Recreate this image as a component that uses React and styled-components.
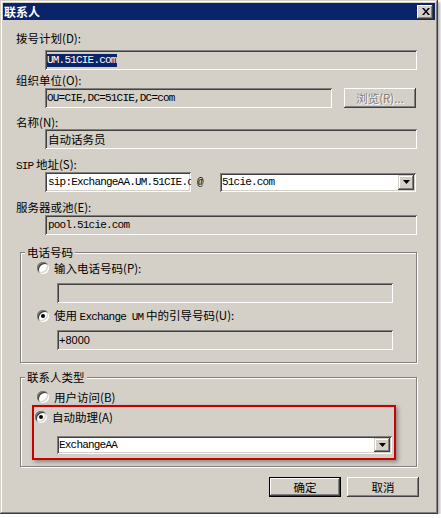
import React from 'react';
import styled, { createGlobalStyle } from 'styled-components';

const CJK = `"Noto Sans CJK SC", "Liberation Sans", sans-serif`;
const MONO = `"Liberation Mono", "Noto Sans CJK SC", monospace`;

const GlobalStyle = createGlobalStyle`
  html, body { margin: 0; padding: 0; background: #ffffff; }
  body { font-family: ${CJK}; }
`;

const Window = styled.div`
  box-sizing: border-box;
  width: 438px;
  height: 514px;
  padding: 3px;
  background: #d4d0c8;
  display: flex;
  flex-direction: column;
  font-family: ${CJK};
  font-size: 11.5px;
  color: #000;
  box-shadow: inset -1px -1px 0 #404040, inset 1px 1px 0 #d4d0c8,
    inset -2px -2px 0 #808080, inset 2px 2px 0 #ffffff,
    2px 2px 3px rgba(0, 0, 0, 0.3);
`;

const TitleBar = styled.div`
  height: 17px;
  flex: none;
  background: #0a246a;
  color: #fff;
  display: flex;
  align-items: center;
  justify-content: space-between;
  padding: 0 2px 0 1px;
  font-weight: bold;
  font-size: 12px;
  line-height: 17px;
`;

const CloseButton = styled.div`
  box-sizing: border-box;
  width: 16px;
  height: 14px;
  background: #d4d0c8;
  display: flex;
  align-items: center;
  justify-content: center;
  padding-left: 1px;
  box-shadow: inset -1px -1px 0 #404040, inset 1px 1px 0 #fff,
    inset -2px -2px 0 #808080, inset 2px 2px 0 #d4d0c8;
`;

const Body = styled.div`
  flex: 1;
  display: flex;
  flex-direction: column;
  align-items: flex-start;
  padding-left: 13px;
`;

const Label = styled.div`
  margin-top: ${(p) => p.$mt}px;
  line-height: 14px;
  height: 14px;
  white-space: nowrap;
`;

const Mono = styled.span`
  font-family: ${MONO};
  font-size: 11px;
  letter-spacing: -0.8px;
`;

const Field = styled.div`
  box-sizing: border-box;
  flex: none;
  width: ${(p) => p.$w}px;
  height: ${(p) => p.$h || 20}px;
  margin-top: ${(p) => p.$mt || 0}px;
  margin-left: ${(p) => p.$ml || 0}px;
  background: ${(p) => (p.$white ? '#ffffff' : '#d4d0c8')};
  padding: 2px 2px 2px ${(p) => (p.$pl != null ? p.$pl : 3)}px;
  display: flex;
  align-items: center;
  overflow: hidden;
  white-space: nowrap;
  font-family: ${(p) => (p.$cjk ? CJK : p.$sans ? `"Liberation Sans", sans-serif` : MONO)};
  font-size: ${(p) => (p.$cjk ? '11.5px' : '11px')};
  letter-spacing: ${(p) => (p.$cjk || p.$sans ? '0' : '-0.8px')};
  box-shadow: inset 1px 1px 0 #808080, inset -1px -1px 0 #ffffff,
    inset 2px 2px 0 #404040, inset -2px -2px 0 #d4d0c8;
`;

const Selected = styled.span`
  background: #0a246a;
  color: #fff;
  line-height: 13px;
  padding-right: 0.8px;
`;

const ComboText = styled.span`
  flex: 1;
  overflow: hidden;
`;

const DropButton = styled.span`
  box-sizing: border-box;
  flex: none;
  width: 16px;
  height: 100%;
  background: #d4d0c8;
  display: flex;
  align-items: center;
  justify-content: center;
  box-shadow: inset -1px -1px 0 #404040, inset 1px 1px 0 #d4d0c8,
    inset -2px -2px 0 #808080, inset 2px 2px 0 #ffffff;
`;

const Row = styled.div`
  display: flex;
  align-items: center;
  margin-top: ${(p) => p.$mt || 0}px;
  margin-left: ${(p) => p.$ml || 0}px;
`;

const At = styled.span`
  font-family: ${MONO};
  font-size: 11px;
  width: 29px;
  padding-left: 6px;
  box-sizing: border-box;
`;

const Button = styled.div`
  box-sizing: border-box;
  width: 72px;
  height: 20px;
  margin-left: ${(p) => p.$ml || 0}px;
  background: #d4d0c8;
  display: flex;
  align-items: center;
  justify-content: center;
  font-size: 11.5px;
  line-height: 14px;
  color: ${(p) => (p.$disabled ? '#808080' : '#000')};
  text-shadow: ${(p) => (p.$disabled ? '1px 1px 0 #ffffff' : 'none')};
  box-shadow: ${(p) =>
    p.$default
      ? 'inset 0 0 0 1px #000, inset -2px -2px 0 #404040, inset 2px 2px 0 #ffffff, inset -3px -3px 0 #808080'
      : 'inset -1px -1px 0 #404040, inset 1px 1px 0 #ffffff, inset -2px -2px 0 #808080, inset 2px 2px 0 #d4d0c8'};
`;

const Group = styled.div`
  position: relative;
  box-sizing: border-box;
  width: 397px;
  margin-top: ${(p) => p.$mt}px;
  margin-left: 4px;
  padding: ${(p) => p.$pad};
  display: flex;
  flex-direction: column;
  align-items: flex-start;
  border: 1px solid #808080;
  box-shadow: inset 1px 1px 0 #ffffff, 1px 1px 0 #ffffff;
`;

const Legend = styled.span`
  position: absolute;
  top: -8px;
  left: 4px;
  padding: 0 2px;
  line-height: 14px;
  background: #d4d0c8;
  white-space: nowrap;
`;

const RadioRow = styled.div`
  display: flex;
  align-items: center;
  gap: 5px;
  height: 14px;
  line-height: 14px;
  margin-top: ${(p) => p.$mt || 0}px;
  white-space: nowrap;
`;

const RadioCircle = styled.span`
  box-sizing: border-box;
  width: 12px;
  height: 12px;
  border-radius: 50%;
  background: #ffffff;
  display: inline-flex;
  align-items: center;
  justify-content: center;
  box-shadow: inset 1px 1px 0 #808080, inset -1px -1px 0 #ffffff,
    inset 2px 2px 0 #404040, inset -2px -2px 0 #d4d0c8;
  &::after {
    content: '';
    width: 4px;
    height: 4px;
    border-radius: 50%;
    background: #000;
    display: ${(p) => (p.$checked ? 'block' : 'none')};
  }
`;

const Highlight = styled.div`
  box-sizing: border-box;
  width: 364px;
  margin-top: 1px;
  margin-left: -5px;
  padding: 3px 4px 4px 1px;
  border: 2px solid #c80000;
  display: flex;
  flex-direction: column;
  align-items: flex-start;
  box-shadow: 2px 2px 4px rgba(0, 0, 0, 0.35);
`;

const Footer = styled.div`
  align-self: stretch;
  display: flex;
  justify-content: flex-end;
  margin-top: 10px;
  padding-right: 16px;
`;

const CloseX = () => (
  <svg width="8" height="7" viewBox="0 0 8 7">
    <path d="M0 0h2l2 2.4L6 0h2L5 3.5 8 7H6L4 4.6 2 7H0l3-3.5z" fill="#000" />
  </svg>
);

const Arrow = () => (
  <svg width="7" height="4" viewBox="0 0 7 4">
    <path d="M0 0h7L3.5 4z" fill="#000" />
  </svg>
);

const Radio = ({ checked, children, mt }) => (
  <RadioRow $mt={mt}>
    <RadioCircle $checked={checked} />
    <span>{children}</span>
  </RadioRow>
);

export default function App() {
  return (
    <>
      <GlobalStyle />
      <Window>
        <TitleBar>
          <span>联系人</span>
          <CloseButton>
            <CloseX />
          </CloseButton>
        </TitleBar>
        <Body>
          <Label $mt={11}>拨号计划(D):</Label>
          <Field $w={372} $mt={5} $ml={29} $pl={2}>
            <Selected>UM.51CIE.com</Selected>
          </Field>

          <Label $mt={3}>组织单位(O):</Label>
          <Row $mt={1} $ml={29}>
            <Field $w={287} $pl={2}>OU=CIE,DC=51CIE,DC=com</Field>
            <Button $ml={12} $disabled>
              浏览(R)...
            </Button>
          </Row>

          <Label $mt={7}>名称(N):</Label>
          <Field $w={372} $ml={29} $cjk>
            自动话务员
          </Field>

          <Label $mt={8}>
            <Mono>SIP</Mono> 地址(S):
          </Label>
          <Row $mt={1} $ml={29}>
            <Field $w={146} $white>
              sip:ExchangeAA.UM.51CIE.com
            </Field>
            <At>@</At>
            <Field $w={196} $h={19} $white $pl={2}>
              <ComboText>51cie.com</ComboText>
              <DropButton>
                <Arrow />
              </DropButton>
            </Field>
          </Row>

          <Label $mt={8}>服务器或池(E):</Label>
          <Field $w={372} $mt={1} $ml={29}>
            pool.51cie.com
          </Field>

          <Group $mt={17} $pad="8px 0 12px 16px">
            <Legend>电话号码</Legend>
            <Radio>输入电话号码(P):</Radio>
            <Field $w={336} $mt={8} $ml={20} />
            <Radio checked mt={6}>
              使用 <Mono>Exchange UM</Mono> 中的引导号码(U):
            </Radio>
            <Field $w={336} $mt={7} $ml={20} $sans $pl={2}>
              +8000
            </Field>
          </Group>

          <Group $mt={14} $pad="12px 0 6px 16px">
            <Legend>联系人类型</Legend>
            <Radio>用户访问(B)</Radio>
            <Highlight>
              <Radio checked>自动助理(A)</Radio>
              <Field $w={335} $h={18} $mt={12} $ml={22} $white $pl={2}>
                <ComboText>ExchangeAA</ComboText>
                <DropButton>
                  <Arrow />
                </DropButton>
              </Field>
            </Highlight>
          </Group>

          <Footer>
            <Button $default>确定</Button>
            <Button $ml={6}>取消</Button>
          </Footer>
        </Body>
      </Window>
    </>
  );
}
